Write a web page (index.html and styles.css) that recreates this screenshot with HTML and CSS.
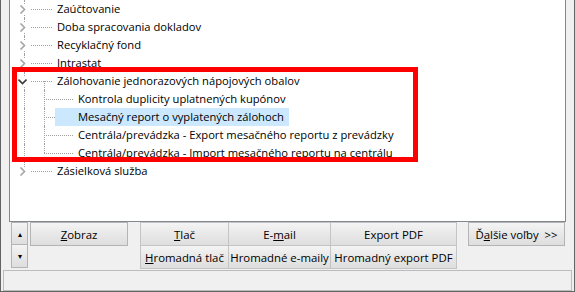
FILE: index.html
```html
<!DOCTYPE html>
<html lang="sk">

<head>
    <meta charset="utf-8">
    <title>Nastavenia</title>
    <link rel="stylesheet" href="styles.css">
</head>

<body>
    <div class="window">
        <div class="tree">
            <div class="row">
                <span class="twist"><i class="vl"></i><svg class="chev" width="9" height="9"><path d="M2.5 0.5 L6.5 4.5 L2.5 8.5" /></svg></span>
                <span class="hl"></span>
                <span class="label">Zaúčtovanie</span>
            </div>
            <div class="row">
                <span class="twist"><i class="vl"></i><svg class="chev" width="9" height="9"><path d="M2.5 0.5 L6.5 4.5 L2.5 8.5" /></svg></span>
                <span class="hl"></span>
                <span class="label">Doba spracovania dokladov</span>
            </div>
            <div class="row">
                <span class="twist"><i class="vl"></i><svg class="chev" width="9" height="9"><path d="M2.5 0.5 L6.5 4.5 L2.5 8.5" /></svg></span>
                <span class="hl"></span>
                <span class="label">Recyklačný fond</span>
            </div>
            <div class="row">
                <span class="twist"><i class="vl"></i><svg class="chev" width="9" height="9"><path d="M2.5 0.5 L6.5 4.5 L2.5 8.5" /></svg></span>
                <span class="hl"></span>
                <span class="label">Intrastat</span>
            </div>
            <div class="row">
                <span class="twist"><i class="vl"></i><svg class="chev open" width="9" height="9"><path d="M0.5 2.5 L4.5 6.5 L8.5 2.5" /></svg></span>
                <span class="hl"><i class="vl down"></i></span>
                <span class="label">Zálohovanie jednorazových nápojových obalov</span>
            </div>
            <div class="row child">
                <span class="twist"><i class="vl"></i></span>
                <span class="pad"></span>
                <span class="branch"><i class="vl"></i><i class="hl"></i></span>
                <span class="label">Kontrola duplicity uplatnených kupónov</span>
            </div>
            <div class="row child">
                <span class="twist"><i class="vl"></i></span>
                <span class="pad"></span>
                <span class="branch"><i class="vl"></i><i class="hl"></i></span>
                <span class="label selected">Mesačný report o vyplatených zálohoch</span>
            </div>
            <div class="row child">
                <span class="twist"><i class="vl"></i></span>
                <span class="pad"></span>
                <span class="branch"><i class="vl"></i><i class="hl"></i></span>
                <span class="label">Centrála/prevádzka - Export mesačného reportu z prevádzky</span>
            </div>
            <div class="row child">
                <span class="twist"><i class="vl"></i></span>
                <span class="pad"></span>
                <span class="branch"><i class="vl up"></i><i class="hl"></i></span>
                <span class="label">Centrála/prevádzka - Import mesačného reportu na centrálu</span>
            </div>
            <div class="row">
                <span class="twist"><i class="vl up"></i><svg class="chev" width="9" height="9"><path d="M2.5 0.5 L6.5 4.5 L2.5 8.5" /></svg></span>
                <span class="hl"></span>
                <span class="label">Zásielková služba</span>
            </div>
        </div>

        <div class="actions">
            <div class="spin">
                <button class="btn arrow">&#9652;</button>
                <button class="btn arrow">&#9662;</button>
            </div>
            <button class="btn show"><u>Z</u>obraz</button>
            <div class="group">
                <button class="btn"><u>T</u>lač</button>
                <button class="btn">E-<u>m</u>ail</button>
                <button class="btn">Export PDF</button>
                <button class="btn"><u>H</u>romadná tlač</button>
                <button class="btn">Hromadné e-maily</button>
                <button class="btn">Hromadný export PDF</button>
            </div>
            <button class="btn more">Ď<u>a</u>lšie voľby &nbsp;&gt;&gt;</button>
        </div>

        <div class="status"></div>
    </div>

    <!-- annotation frame over the tree -->
    <div class="mark"></div>
</body>

</html>
```

FILE: styles.css
```css
body {
    margin: 0;
    position: relative;
    font-family: 'Open Sans', 'Noto Sans', sans-serif;
    font-size: 11.2px;
    color: #000;
}

.window {
    width: 575px;
    height: 292px;
    box-sizing: border-box;
    border: 1px solid #646464;
    border-top: none;
    background-color: #f0f0f0;
    display: flex;
    flex-direction: column;
}

/* tree view */
.tree {
    margin: 0 8px;
    height: 222px;
    box-sizing: border-box;
    border: 1px solid #828790;
    border-top: none;
    background-color: #fff;
}

.row {
    display: flex;
    height: 18px;
    line-height: 18px;
}

.twist {
    display: grid;
    width: 21px;
    flex: none;
}

.twist > *,
.branch > *,
.hl > * {
    grid-area: 1 / 1;
}

.vl {
    display: block;
    width: 0;
    height: 18px;
    border-left: 1px dotted #a0a0a0;
    justify-self: start;
}

.twist .vl {
    margin-left: 14px;
}

.vl.up {
    height: 9px;
    align-self: start;
}

.vl.down {
    height: 9px;
    align-self: end;
    margin-left: 13px;
}

.chev {
    align-self: center;
    margin-left: 8px;
    background: #fff;
}

.chev path {
    fill: none;
    stroke: #a6a6a6;
    stroke-width: 1.6;
}

.chev.open path {
    stroke: #3c3c3c;
}

span.hl {
    display: grid;
    width: 21px;
    height: 18px;
    flex: none;
}

.hl::before {
    content: "";
    grid-area: 1 / 1;
    align-self: center;
    border-top: 1px dotted #a0a0a0;
    margin-top: 1px;
}

span.hl > .vl {
    margin-left: 13px;
}

.pad {
    width: 13px;
    flex: none;
}

.branch {
    display: grid;
    width: 29px;
    flex: none;
}

i.hl {
    align-self: center;
    border-top: 1px dotted #a0a0a0;
    margin-top: 1px;
}

.label {
    margin-left: 5px;
    white-space: nowrap;
}

.label.selected {
    margin-left: -18px;
    padding: 0 5px 0 23px;
    background-color: #cce8ff;
}

/* buttons */
.actions {
    display: flex;
    align-items: flex-start;
    height: 46px;
    padding-left: 10px;
}

.btn {
    font-family: inherit;
    font-size: 11.4px;
    color: #000;
    margin: 0;
    padding: 0;
    border: 1px solid #b4b4b4;
    background: linear-gradient(#f4f4f4, #e8e8e8 50%, #dedede);
    white-space: nowrap;
}

.spin {
    display: flex;
    flex-direction: column;
    width: 17px;
}

.arrow {
    height: 23px;
    font-size: 8px;
    line-height: 1;
}

.arrow + .arrow {
    border-top: none;
}

.show {
    width: 98px;
    height: 24px;
    margin-left: 2px;
}

.group {
    display: grid;
    grid-template-columns: 88px 102px 126px;
    grid-auto-rows: 23px;
    margin-left: 12px;
    border-left: 1px solid #c4c4c4;
    border-top: 1px solid #c4c4c4;
}

.group .btn {
    border: none;
    border-right: 1px solid #c4c4c4;
    border-bottom: 1px solid #c4c4c4;
}

.more {
    width: 97px;
    height: 24px;
    margin-left: 11px;
}

.status {
    height: 21px;
    margin: 2px 2px 0;
    box-sizing: border-box;
    border: 1px solid #bcbcbc;
}

/* red annotation */
.mark {
    position: absolute;
    left: 12px;
    top: 67px;
    width: 406px;
    height: 95px;
    box-sizing: border-box;
    border: 5px solid #ff0000;
}
```
